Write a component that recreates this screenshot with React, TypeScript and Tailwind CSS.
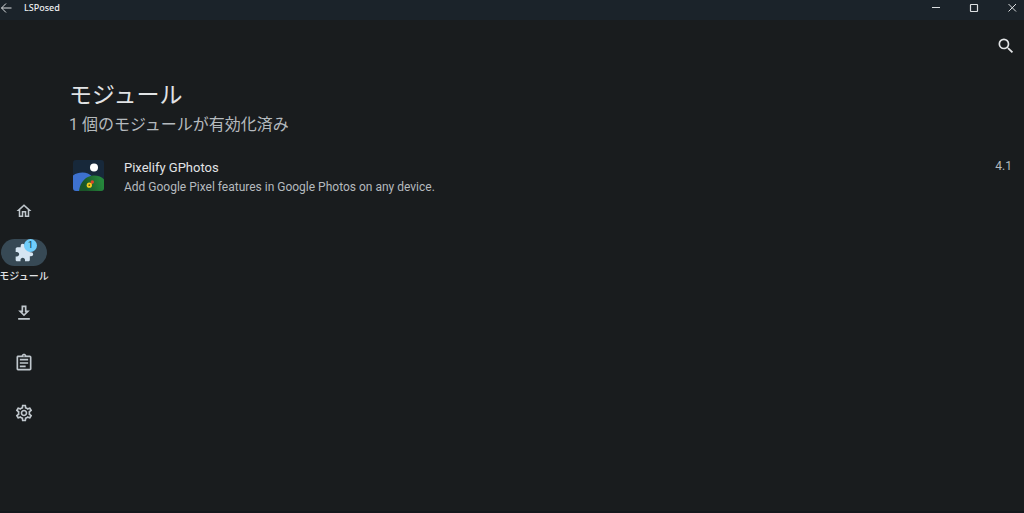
import {
  MdExtension,
  MdOutlineAssignment,
  MdOutlineHome,
  MdOutlineSettings,
  MdSearch,
} from "react-icons/md";

const modules = [
  {
    name: "Pixelify GPhotos",
    description: "Add Google Pixel features in Google Photos on any device.",
    version: "4.1",
  },
];

function DownloadIcon() {
  return (
    <svg viewBox="0 0 24 24" fill="currentColor" className="size-5">
      <path d="M19 9h-4V3H9v6H5l7 7 7-7zm-8 2V5h2v6h1.17L12 13.17 9.83 11H11zm-6 7h14v2H5z" />
    </svg>
  );
}

function ModuleIcon() {
  return (
    <svg viewBox="0 0 31 31" className="size-[31px] rounded-[3px]">
      <defs>
        <linearGradient id="hill" x1="0" y1="0.6" x2="1" y2="0.4">
          <stop offset="0.2" stopColor="#1a5528" />
          <stop offset="0.9" stopColor="#25863b" />
        </linearGradient>
      </defs>
      <rect width="31" height="31" fill="#17283a" />
      <circle cx="21" cy="7.500" r="4" fill="#ffffff" />
      <path d="M0 15.500c3-2.200 6-3 9.500-3 4 0 7 1.500 9.500 4V31H0z" fill="#3d71cf" />
      <path d="M6 31c1-9 7-15.500 15-15.500 4 0 8 1.500 10 4V31z" fill="url(#hill)" />
      <path d="M17 25l2.500-3" stroke="#c94a2a" strokeWidth="1.500" />
      <circle cx="19.300" cy="22" r="1.700" fill="#d9472b" />
      <circle cx="16.300" cy="25.200" r="2.600" fill="#f3cd1d" />
      <circle cx="16.300" cy="25.200" r="0.900" fill="#6b5b10" />
    </svg>
  );
}

function TitleBar() {
  return (
    <header className="flex h-5 items-start justify-between bg-[#1b232a] text-[#dcdfe1]">
      <div className="flex h-[15px] items-center gap-3">
        <button type="button" aria-label="Back">
          <svg viewBox="0 0 12 12" fill="none" stroke="currentColor" className="size-3">
            <path d="M11.500 6H1.500M6 1.500L1.500 6 6 10.500" />
          </svg>
        </button>
        <span className="font-['Noto_Sans',sans-serif] text-[9px] leading-none font-medium text-[#eef0f2]">
          LSPosed
        </span>
      </div>
      <div className="flex h-[15px] items-center gap-7 pr-[7px]">
        <button type="button" aria-label="Minimize">
          <svg viewBox="0 0 10 10" stroke="currentColor" className="size-[10px]">
            <path d="M1 4.500h8" />
          </svg>
        </button>
        <button type="button" aria-label="Maximize">
          <svg viewBox="0 0 10 10" fill="none" stroke="currentColor" className="size-[10px]">
            <rect x="1.500" y="1.500" width="7" height="7" rx="0.500" strokeWidth="1.200" />
          </svg>
        </button>
        <button type="button" aria-label="Close">
          <svg viewBox="0 0 10 10" stroke="currentColor" className="size-[10px]">
            <path d="M1.500 1l7.500 7.500M9 1L1.500 8.500" />
          </svg>
        </button>
      </div>
    </header>
  );
}

function NavRail() {
  const item = "flex h-[50px] w-full items-center justify-center";
  return (
    <nav className="flex w-12 shrink-0 flex-col items-center pt-[166px] text-[#c0c7cd]">
      <a href="#home" aria-label="Home" className={item}>
        <MdOutlineHome className="size-[18px]" />
      </a>
      <a href="#modules" className="flex h-[52px] w-full flex-col items-center pt-[3px]">
        <span className="relative flex h-[27px] w-[46px] items-center justify-center rounded-full bg-[#374955] text-[#d5e5f2]">
          <MdExtension className="size-5" />
          <span className="absolute top-0 left-[23px] flex size-[13px] items-center justify-center rounded-full bg-[#70cdfb] text-[9px] leading-none text-[#00344a]">
            1
          </span>
        </span>
        <span className="mt-[5px] text-[10px] leading-3 font-medium whitespace-nowrap text-[#e1e3e5]">
          モジュール
        </span>
      </a>
      <a href="#repository" aria-label="Repository" className={item}>
        <DownloadIcon />
      </a>
      <a href="#logs" aria-label="Logs" className={item}>
        <MdOutlineAssignment className="size-5" />
      </a>
      <a href="#settings" aria-label="Settings" className={item}>
        <MdOutlineSettings className="size-5" />
      </a>
    </nav>
  );
}

export default function App() {
  return (
    <div className="flex min-h-screen flex-col overflow-hidden border-b-2 border-[#14171c] bg-[#191c1e] font-['Roboto','Noto_Sans_CJK_JP',sans-serif]">
      <TitleBar />
      <div className="flex flex-1">
        <NavRail />
        <main className="flex min-w-0 flex-1 flex-col">
          <div className="flex justify-end pt-4 pr-2">
            <button type="button" aria-label="Search" className="text-[#e1e3e5]">
              <MdSearch className="size-5" />
            </button>
          </div>
          <div className="pt-6 pl-[21px]">
            <h1 className="text-[23px] leading-8 text-[#e1e3e5]">モジュール</h1>
            <p className="text-base leading-[26px] text-[#b5babe]">1 個のモジュールが有効化済み</p>
          </div>
          <ul className="pt-5 pr-3 pl-[25px]">
            {modules.map((module) => (
              <li key={module.name} className="flex items-start">
                <div className="pt-[2px] pr-5">
                  <ModuleIcon />
                </div>
                <div className="min-w-0 flex-1">
                  <h2 className="text-[13px] leading-5 text-[#e1e3e5]">{module.name}</h2>
                  <p className="text-xs leading-[18px] text-[#b5babe]">{module.description}</p>
                </div>
                <span className="text-xs leading-4 text-[#b5babe]">{module.version}</span>
              </li>
            ))}
          </ul>
        </main>
      </div>
    </div>
  );
}
